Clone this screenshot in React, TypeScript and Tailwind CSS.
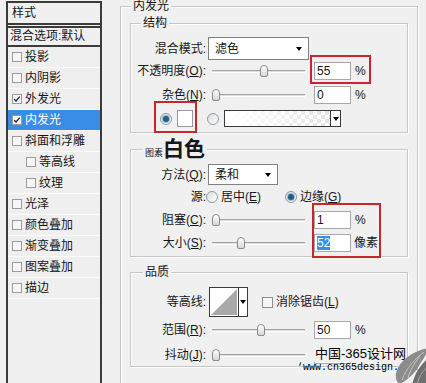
import type { ReactNode } from "react"

const styles = [
  { name: "投影" },
  { name: "内阴影" },
  { name: "外发光", checked: true },
  { name: "内发光", checked: true, active: true },
  { name: "斜面和浮雕" },
  { name: "等高线", sub: true },
  { name: "纹理", sub: true },
  { name: "光泽" },
  { name: "颜色叠加" },
  { name: "渐变叠加" },
  { name: "图案叠加" },
  { name: "描边" },
]

const Check = ({ on, size }: { on?: boolean; size: "sm" | "md" }) => (
  <span
    className={
      size === "sm"
        ? "flex h-[10px] w-[10px] shrink-0 items-center justify-center border border-[#9a9a9a] bg-[#f6f6f6]"
        : "flex h-[11px] w-[11px] shrink-0 items-center justify-center border border-[#8f8f8f] bg-[#f6f6f6]"
    }
  >
    {on && (
      <svg viewBox="0 0 10 10" className="h-[8px] w-[8px]">
        <path d="M1.5 5.2l2.3 2.3 4.7-5.5" fill="none" stroke="#1d2c4d" strokeWidth="1.8" />
      </svg>
    )}
  </span>
)

const Radio = ({ on }: { on?: boolean }) => (
  <span className="flex h-[12px] w-[12px] shrink-0 items-center justify-center rounded-full border border-[#8d99a5] bg-gradient-to-br from-[#dcdcdc] to-white">
    {on && <span className="h-[6px] w-[6px] rounded-full bg-[#2b5d7e] shadow-[0_0_0_1px_#8fbcd8]" />}
  </span>
)

const Arrow = () => (
  <span className="h-0 w-0 border-x-[3.5px] border-t-[4px] border-x-transparent border-t-black" />
)

const Label = ({ children }: { children: ReactNode }) => (
  <span className="w-[75px] shrink-0 text-right">{children}</span>
)

const Slider = ({ at }: { at: number }) => (
  <div className="relative ml-[6px] h-[14px] w-[93px] shrink-0">
    <div className="absolute left-0 right-0 top-[6px] h-[3px] border-y border-t-[#a3a3a3] border-b-white bg-[#dedede]" />
    <div
      className="absolute top-[1px] h-[12px] w-[8px] rounded-[4px_4px_2px_2px] border border-[#8a8a8a] bg-gradient-to-b from-white to-[#d6d6d6]"
      style={{ left: at }}
    />
  </div>
)

const Field = ({ value, selected }: { value?: string; selected?: boolean }) => (
  <div className="ml-[9px] h-[18px] w-[37px] shrink-0 border border-[#a8a8a8] bg-white pl-[2px] leading-[16px]">
    {selected ? <span className="bg-[#3390ee] text-white">{value}</span> : value}
  </div>
)

const group = "border border-[#c6c6c6] shadow-[inset_1px_1px_0_#fff,1px_1px_0_#fff]"

export default function App() {
  return (
    <div className="relative flex h-[383px] w-[426px] overflow-hidden bg-[#f0f0f0] font-['Liberation_Sans','Noto_Sans_CJK_SC',sans-serif] text-[12px] text-[#161616]">
      {/* style list */}
      <div className="ml-[6px] mt-[1px] flex h-[400px] w-[96px] shrink-0 flex-col border-x-2 border-[#3b3b3b]">
        <div className="h-[24px] border-y-2 border-[#3b3b3b] pl-[4px] leading-[20px]">样式</div>
        <div className="mt-[1px] h-[21px] border-y-2 border-[#3b3b3b] pl-[2px] leading-[17px]">混合选项:默认</div>
        {styles.map((s) => (
          <div
            key={s.name}
            className={
              s.active
                ? "flex h-[21px] items-center border-b border-[#f7f7f7] bg-[#3a8de6] text-white"
                : "flex h-[21px] items-center border-b border-[#fafafa] bg-[#efefef]"
            }
          >
            <span className={s.sub ? "ml-[18px]" : "ml-[4px]"}>
              <Check on={s.checked} size="sm" />
            </span>
            <span className="ml-[3px]">{s.name}</span>
          </div>
        ))}
      </div>

      {/* settings */}
      <div className="pl-[18px]">
        <fieldset className={`${group} h-[400px] w-[298px] px-[9px]`}>
          <legend className="ml-[1px] bg-[#f0f0f0] px-[2px] leading-[12px]">内发光</legend>

          <fieldset className={`${group} mt-[5px] pb-[5px]`}>
            <legend className="ml-[10px] bg-[#f0f0f0] px-[2px] leading-[12px]">结构</legend>
            <div className="mt-[8px] flex h-[23px] items-center">
              <Label>混合模式:</Label>
              <div className="ml-[2px] flex h-[23px] w-[101px] items-center border border-[#808080] bg-white pl-[6px]">
                滤色
                <span className="ml-auto mr-[6px] flex">
                  <Arrow />
                </span>
              </div>
            </div>
            <div className="mt-[2px] flex h-[18px] items-center">
              <Label>
                不透明度(<u>O</u>):
              </Label>
              <Slider at={48} />
              <Field value="55" />
              <span className="ml-[4px]">%</span>
            </div>
            <div className="mt-[6px] flex h-[18px] items-center">
              <Label>
                杂色(<u>N</u>):
              </Label>
              <Slider at={0} />
              <Field value="0" />
              <span className="ml-[4px]">%</span>
            </div>
            <div className="mt-[6px] flex h-[17px] items-center pl-[29px]">
              <Radio on />
              <span className="ml-[5px] h-[17px] w-[16px] border border-[#9a9a9a] bg-white" />
              <span className="ml-[14px]">
                <Radio />
              </span>
              <div className="ml-[5px] flex h-[17px] border border-[#3a3a3a]">
                <span className="h-full w-[105px] [background-image:linear-gradient(to_right,#fff_5%,rgba(255,255,255,0.2)),repeating-conic-gradient(#dcdcdc_0_25%,#fff_0_50%)] [background-size:100%_100%,8px_8px]" />
                <span className="flex w-[10px] items-center justify-center border-l border-[#3a3a3a] bg-white">
                  <Arrow />
                </span>
              </div>
            </div>
          </fieldset>

          <fieldset className={`${group} mt-[4px] pb-[4px]`}>
            <legend className="ml-[12px] h-[24px] bg-[#f0f0f0] px-[2px] leading-[24px]">
              <span className="text-[9px]">图素</span>
              <span className="text-[21px] font-bold">白色</span>
            </legend>
            <div className="mt-[3px] flex h-[21px] items-center">
              <Label>
                方法(<u>Q</u>):
              </Label>
              <div className="ml-[2px] flex h-[21px] w-[70px] items-center border border-[#808080] bg-white pl-[6px]">
                柔和
                <span className="ml-auto mr-[6px] flex">
                  <Arrow />
                </span>
              </div>
            </div>
            <div className="mt-[5px] flex h-[14px] items-center">
              <Label>源:</Label>
              <Radio />
              <span className="ml-[3px]">
                居中(<u>E</u>)
              </span>
              <span className="ml-[24px]">
                <Radio on />
              </span>
              <span className="ml-[3px]">
                边缘(<u>G</u>)
              </span>
            </div>
            <div className="mt-[7px] flex h-[18px] items-center">
              <Label>
                阻塞(<u>C</u>):
              </Label>
              <Slider at={0} />
              <Field value="1" />
              <span className="ml-[4px]">%</span>
            </div>
            <div className="mt-[5px] flex h-[18px] items-center">
              <Label>
                大小(<u>S</u>):
              </Label>
              <Slider at={25} />
              <Field value="52" selected />
              <span className="ml-[3px]">像素</span>
            </div>
          </fieldset>

          <fieldset className={`${group} mt-[9px] pb-[2px]`}>
            <legend className="ml-[12px] bg-[#f0f0f0] px-[2px] leading-[12px]">品质</legend>
            <div className="mt-[9px] flex h-[30px] items-center">
              <Label>等高线:</Label>
              <div className="ml-[3px] flex h-[30px] w-[39px] border border-[#3a3a3a] bg-white">
                <svg viewBox="0 0 28 28" className="h-[28px] w-[28px]">
                  <polygon points="1,27 27,1 27,27" fill="#a9a9a9" />
                </svg>
                <span className="flex flex-1 items-center justify-center border-l border-[#3a3a3a]">
                  <Arrow />
                </span>
              </div>
              <span className="ml-[14px]">
                <Check size="md" />
              </span>
              <span className="ml-[3px]">
                消除锯齿(<u>L</u>)
              </span>
            </div>
            <div className="mt-[4px] flex h-[18px] items-center">
              <Label>
                范围(<u>R</u>):
              </Label>
              <Slider at={45} />
              <Field value="50" />
              <span className="ml-[4px]">%</span>
            </div>
            <div className="mt-[7px] flex h-[18px] items-center">
              <Label>
                抖动(<u>J</u>):
              </Label>
              <Slider at={0} />
              {/* value and unit sit under the watermark */}
              <Field />
            </div>
          </fieldset>
        </fieldset>
      </div>

      {/* annotations */}
      <div className="absolute left-[310px] top-[55px] h-[29px] w-[61px] border-2 border-[#c8262e]" />
      <div className="absolute left-[154px] top-[101px] h-[32px] w-[43px] border-2 border-[#c8262e]" />
      <div className="absolute left-[312px] top-[203px] h-[55px] w-[69px] border-2 border-[#c8262e]" />

      {/* watermark */}
      <div className="absolute left-[314px] top-[346px] bg-[#f0f0f0] px-[1px] text-[13px] leading-[16px] text-black">
        中国-365设计网
      </div>
      <div className="absolute left-[297px] top-[362px] font-['Liberation_Mono',monospace] text-[10px] leading-[12px] text-black">
        ‘www.cn365design.com
      </div>
      <svg viewBox="0 0 40 40" className="absolute left-[390px] top-[346px] h-[40px] w-[40px]">
        <path d="M38 2 C28 4 14 10 8 22 C4 30 6 36 10 38 C18 34 26 26 30 18 C34 12 37 8 38 2 Z" fill="#8c8c8c" />
        <path d="M36 14 C30 20 24 28 22 40 L40 40 L40 16 Z" fill="#6f6f6f" />
        <path d="M34 6 C26 12 16 22 12 34 M30 10 C24 18 20 24 18 32" stroke="#d0d0d0" strokeWidth="0.8" fill="none" />
        <path d="M38 20 C32 26 28 32 27 40" stroke="#b5b5b5" strokeWidth="0.8" fill="none" />
      </svg>
    </div>
  )
}
